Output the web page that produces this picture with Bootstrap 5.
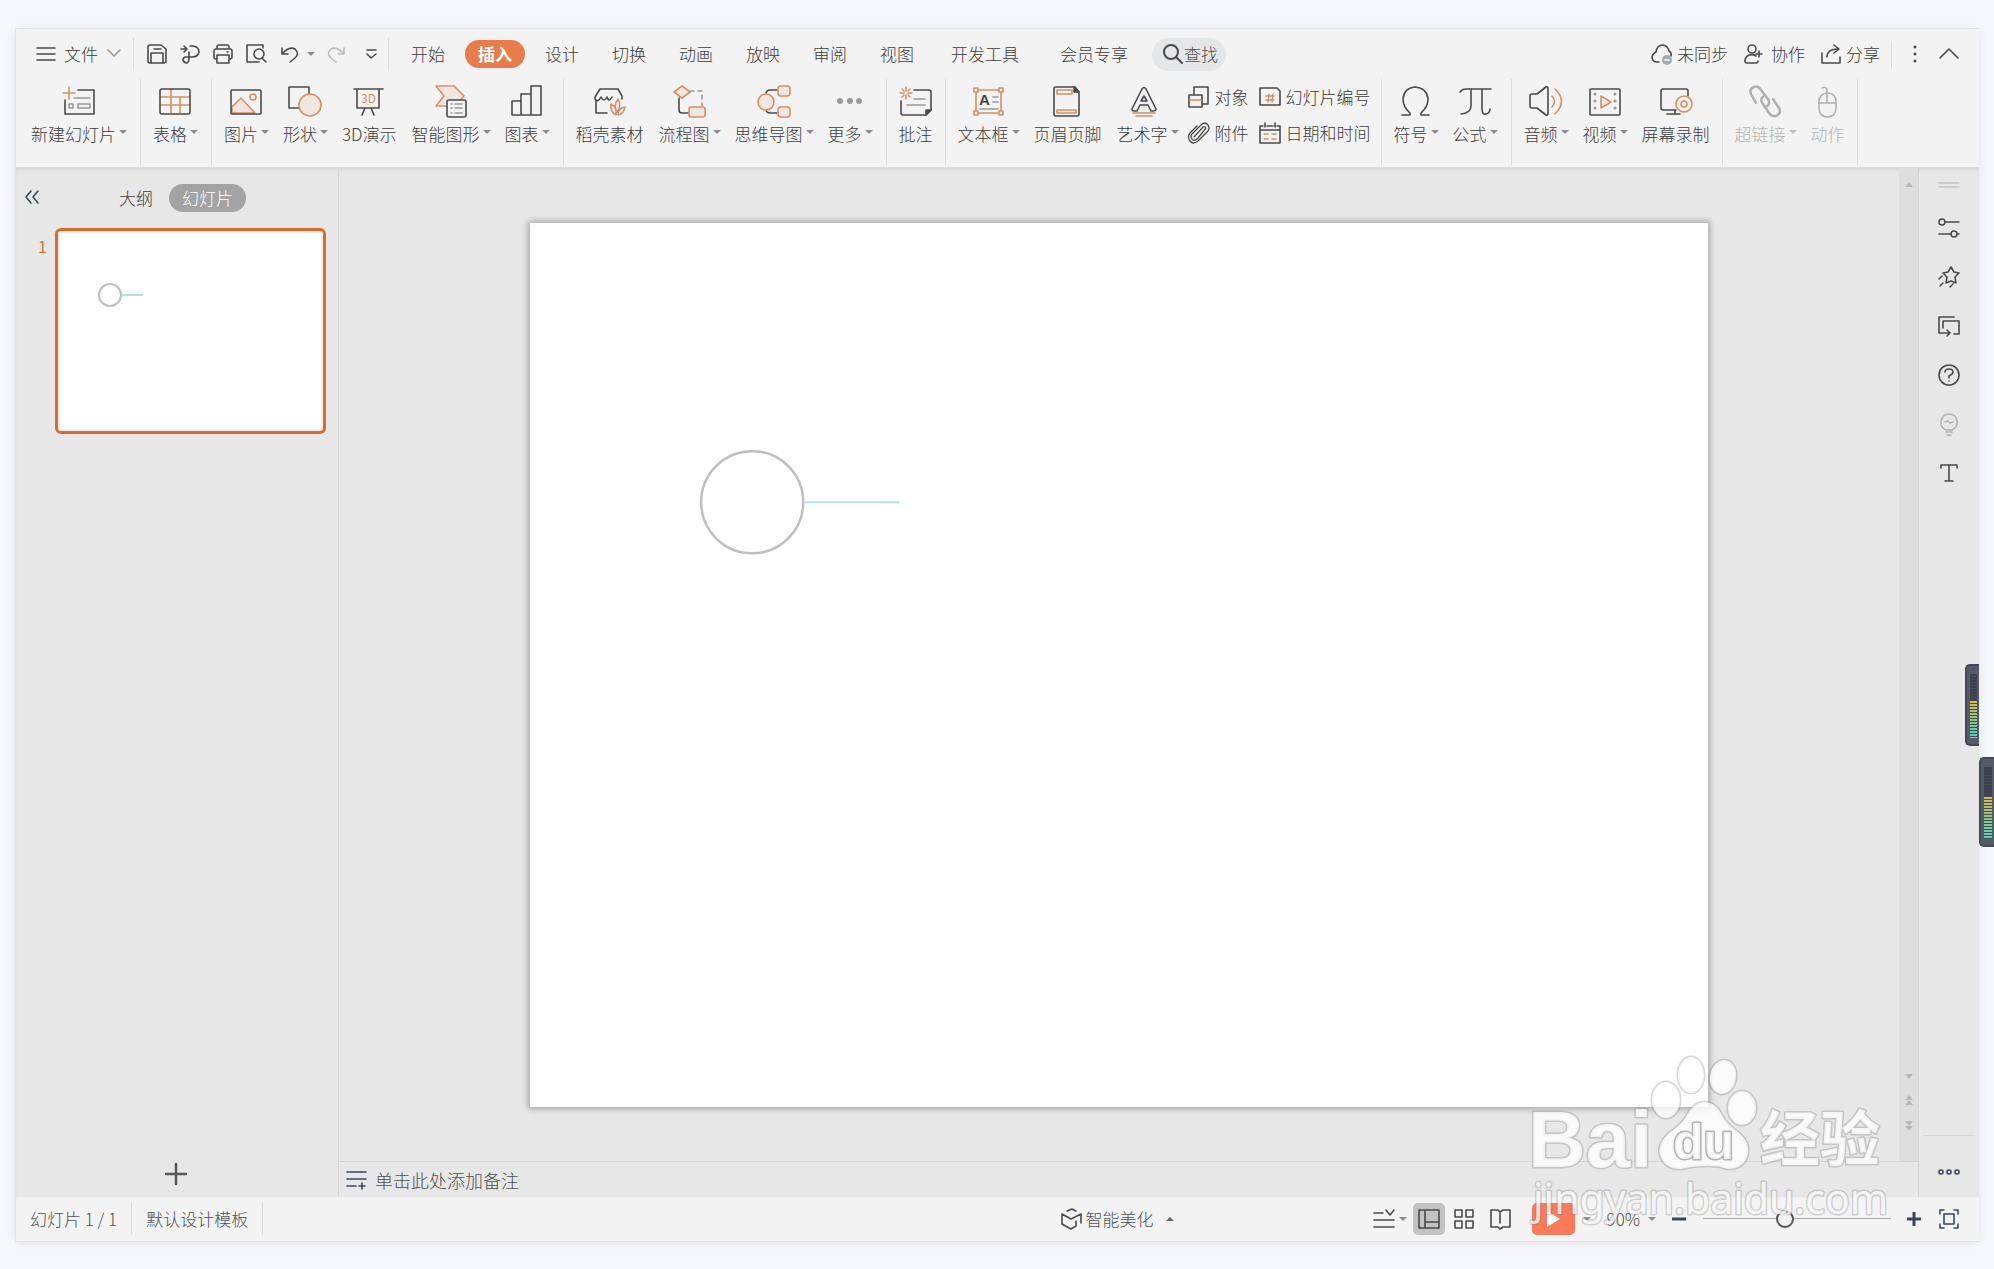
<!DOCTYPE html>
<html lang="zh-CN">
<head>
<meta charset="utf-8">
<meta name="viewport" content="width=device-width, initial-scale=1">
<title>演示文稿</title>
<link href="https://cdn.jsdelivr.net/npm/bootstrap@5.3.0/dist/css/bootstrap.min.css" rel="stylesheet">
<script src="https://cdn.jsdelivr.net/npm/bootstrap@5.3.0/dist/js/bootstrap.bundle.min.js"></script>
<style>
:root { --ink:#4a4a4a; --soft:#999; --line:#dedede; --bar:#f3f3f3; --pane:#e7e7e7; --accent:#e97c4b; --orange:#d98f62; --tint:#f1e6e0; --navy:#3a4560; }
body { background:#f7f8fb; color:#3c3c3c; font-family:"Noto Sans CJK SC",sans-serif; font-size:17px; line-height:24px; font-weight:300; min-height:100vh; padding:28px 15px; }
button, a, input { font:inherit; color:inherit; }
a { text-decoration:none; }
.plain { border:0; background:none; padding:0; color:inherit; white-space:nowrap; }
svg { display:block; overflow:visible; fill:none; stroke:var(--ink); stroke-width:1.6; stroke-linejoin:round; stroke-linecap:round; flex:none; }
svg .o { stroke:var(--orange); }
svg .t { stroke:var(--orange); fill:var(--tint); }
svg .g { stroke:var(--soft); }
svg .n { stroke:var(--navy); }
svg .b { fill:var(--bar); }
svg text { stroke:none; }
.app-window { height:calc(100vh - 55px); min-height:700px; background:var(--bar); border:1px solid #e3e4e5; box-shadow:0 1px 10px rgba(0,0,0,.09); border-right:0; }
.menu-row { height:50px; padding:0 20px; }
.bar-rule { width:1px; background:var(--line); }
.menu-row .bar-rule { height:33px; margin-left:11px; }
.menu-row .bar-rule.short { height:27px; }
.caret { width:0; height:0; border:4px solid transparent; border-top-color:#8c8c8c; border-bottom:0; flex:none; }
.caret.up { border-top:0; border-bottom:4px solid #666; }
.quick { gap:13px; margin-left:13px; }
.tabs { gap:7px; margin-left:9px; }
.tabs a { padding:2px 13px; border-radius:14px; white-space:nowrap; }
.tabs a.wide { padding:2px 17px; }
.tabs a.active { background:var(--accent); color:#fff; font-weight:700; }
.find-box { width:74px; height:33px; border-radius:17px; background:#e5e6e8; margin-left:7px; padding:0 6px 0 10px; }
.find-box input, .notes input { border:0; background:none; padding:0; outline:0; min-width:0; width:100%; }
.find-box input::placeholder, .notes input::placeholder { color:#505050; opacity:1; }
.end-tools { gap:21px; padding-left:20px; }
.ribbon { height:89px; padding-left:15px; border-bottom:1px solid #dcdcdc; }
.group { height:86px; gap:15px; padding:6px 12px 0; border-right:1px solid var(--line); }
.group.drop { padding-right:14px; }
.group.mixed { padding-right:10px; }
.group:first-child { padding-left:0; }
.tool { gap:5px; }
.tool .caret { margin:-4px -1px 0 3px; }
.tool.off { color:#b4b4b4; }
.tool.off svg { stroke:#b0b0b0; }
.tool.off .caret { border-top-color:#c0c0c0; }
.pairs { gap:12px; margin-left:-5px; }
.pairs .plain { gap:5px; }
.work { background:var(--pane); min-height:0; box-shadow:inset 0 3px 4px -2px rgba(0,0,0,.1); }
.slides-pane { width:323px; border-right:1px solid #d8d8d8; flex:none; }
.pane-head { height:28px; margin-top:16px; padding-left:9px; }
.outline-tab { margin-left:80px; }
.pill { background:#a3a3a3; color:#fff; border-radius:14px; padding:2px 13px; height:28px; margin-left:16px; }
.thumb { width:271px; height:206px; border:3px solid #dc6b2b; border-radius:6px; background:#fff; box-shadow:inset 0 0 0 2px #eee; margin-left:8px; padding:0; }
.num { width:17px; padding-top:6px; margin-left:14px; color:#dc6b2b; text-align:right; font-size:16px; font-weight:400; }
.add-slide { margin-bottom:12px; margin-right:3px; }
.stage { padding:55px 191px; min-height:0; }
.slide { background:#fff; box-shadow:0 0 6px 2px rgba(0,0,0,.28); aspect-ratio:1177/883; width:100%; }
.scroller { width:20px; background:#dedede; padding:14px 0 30px; gap:8px; border-right:1px solid #d6d6d6; }
.scroller svg { stroke:none; fill:#b8b8b8; }
.notes { height:36px; border-top:1px solid #d6d6d6; padding:0 6px 0 7px; gap:8px; font-size:18px; border-right:1px solid #d6d6d6; }
.side { width:60px; flex:none; padding-top:14px; }
.side .plain { margin-bottom:27px; }
.side .grip { margin-bottom:29px; }
.side hr { width:52px; margin:0 0 33px; color:#aaa; }
.side .last { margin-bottom:22px; }
.status { height:44px; flex:none; border-top:1px solid #eee; color:#505050; padding-bottom:2px; }
.status .bar-rule { height:33px; margin:0 14px; }
.slide-count { margin-left:14px; }
.view-on { background:#c2c2c2; border-radius:5px; padding:5px; margin-left:6px; }
.view-tools { margin-left:199px; padding-right:20px; }
.fit { margin-left:18px; }
.play { background:#fb7a5a; border-radius:5px; width:43px; height:32px; margin-left:20px; }
.zoomer { appearance:none; width:188px; height:18px; background:linear-gradient(#aaa,#aaa) center/100% 1px no-repeat; margin:0 16px; }
.zoomer::-webkit-slider-thumb { appearance:none; width:18px; height:18px; border-radius:50%; border:2px solid #555; background:var(--bar); }
.meter { width:14px; height:82px; right:15px; top:664px; background:#555a6a; border:2px solid #454956; border-right:0; border-radius:5px 0 0 5px; padding:8px 2px 6px 3px; }
.meter.low { right:0; top:757px; width:15px; height:90px; }
.meter i { display:block; height:100%; background:repeating-linear-gradient(transparent 0 2px,#454956 2px 3px),linear-gradient(#3c404c 42%,#d6bd4a 42%,#9cc46c 65%,#4fd3c0); }
.stamp { right:105px; bottom:34px; pointer-events:none; }
.stamp * { paint-order:stroke; }
.stamp g { fill:rgba(255,255,255,.78); stroke:rgba(120,120,120,.3); stroke-width:3; }
.stamp text { stroke:rgba(120,120,120,.3); stroke-width:3; }
.stamp .cutout { stroke:#b4b4b4; }
</style>
</head>
<body>
<main class="app-window d-flex flex-column">
<header>
<nav class="menu-row d-flex align-items-center" aria-label="菜单">
  <button class="plain d-flex align-items-center"><svg width="20" height="14"><path d="M1 1H19M1 7H19M1 13H19"/></svg><span class="ms-2">文件</span><svg class="ms-2" width="16" height="10"><path class="g" d="M2 1L8 7L14 1"/></svg></button>
  <span class="bar-rule"></span>
  <div class="quick d-flex align-items-center">
    <button class="plain" aria-label="保存"><svg width="20" height="20"><path d="M3 1H14L19 5V17Q19 19 17 19H3Q1 19 1 17V3Q1 1 3 1M4 19V9H16V19M7 5H14"/></svg></button>
    <button class="plain" aria-label="输出"><svg width="20" height="20"><path d="M1 5H7M4 2L7 5L4 8M10 2H13Q19 3 19 8Q18 13 12 13H6Q3 13 3 16Q4 19 7 19Q9 18 9 15V8"/></svg></button>
    <button class="plain" aria-label="打印"><svg width="20" height="20"><path d="M4 5V3Q4 1 6 1H14Q16 1 16 3V5M4 15H3Q1 15 1 13V7Q1 5 3 5H17Q19 5 19 7V13Q19 15 17 15H16M4 11H16V19H4ZM14 8H15"/></svg></button>
    <button class="plain" aria-label="预览"><svg width="21" height="20"><path d="M17 4V1H1V18H13M16 14L20 18"/><circle cx="13" cy="10" r="5"/></svg></button>
    <button class="plain d-flex align-items-center" aria-label="撤销"><svg width="19" height="18"><path d="M2 3V9H8M2 9Q9 1 15 4Q20 9 15 13L10 17"/></svg><span class="caret ms-2"></span></button>
    <button class="plain" aria-label="重做"><svg width="17" height="18"><path stroke="#bbb" d="M16 3V9H10M16 9Q9 1 3 4Q-2 9 3 13L8 17"/></svg></button>
    <button class="plain ms-2" aria-label="自定义"><svg width="11" height="11"><path d="M1 1H10M1 5L5 9L10 5"/></svg></button>
  </div>
  <span class="bar-rule"></span>
  <div class="tabs d-flex align-items-center">
    <a href="#">开始</a><a href="#" class="active">插入</a><a href="#">设计</a><a href="#">切换</a><a href="#">动画</a><a href="#">放映</a><a href="#">审阅</a><a href="#">视图</a><a href="#" class="wide">开发工具</a><a href="#" class="wide">会员专享</a>
  </div>
  <label class="find-box d-flex align-items-center"><svg width="22" height="22"><circle cx="9" cy="9" r="7" stroke-width="2"/><path stroke-width="2" d="M14 14L20 20"/></svg><input type="text" placeholder="查找" aria-label="查找"></label>
  <div class="d-flex align-items-center ms-auto">
    <button class="plain d-flex align-items-center gap-1"><svg width="22" height="20"><path d="M8 18H5Q1 17 1 13Q2 9 5 8Q6 1 12 1Q17 2 18 7Q21 9 20 12"/><circle cx="16" cy="16" r="5" fill="#a2a9b8" stroke="none"/><path stroke="#fff" d="M14 16H18"/></svg>未同步</button>
    <button class="plain d-flex align-items-center gap-2 ms-3"><svg width="19" height="20"><circle cx="8" cy="5" r="4"/><path d="M12 12Q9 10 5 11Q1 13 1 17Q1 19 3 19H12Q14 19 14 17M15 7V13M12 10H18"/></svg>协作</button>
    <button class="plain d-flex align-items-center gap-1 ms-3"><svg width="21" height="20"><path d="M1 9V19H19V13M6 13Q6 5 17 5M13 1L18 5L13 9"/></svg>分享</button>
    <span class="bar-rule short"></span>
    <div class="end-tools d-flex align-items-center">
      <button class="plain" aria-label="更多选项"><svg width="6" height="18"><path stroke-width="3" d="M3 2V2M3 9V9M3 16V16"/></svg></button>
      <button class="plain" aria-label="收起"><svg width="20" height="12"><path d="M1 10L10 1L19 10"/></svg></button>
    </div>
  </div>
</nav>
<div class="ribbon d-flex">
  <div class="group drop d-flex align-items-start">
    <button class="plain tool d-flex flex-column align-items-center"><svg width="32" height="32"><path class="o" d="M6 2V14M0 8H12"/><path d="M15 5H31V29H2V15"/><path class="g" d="M11 13H27M6 19H10V23H6ZM15 19H27V23H15Z"/></svg><span class="d-flex align-items-center">新建幻灯片<i class="caret"></i></span></button>
  </div>
  <div class="group drop d-flex align-items-start">
    <button class="plain tool d-flex flex-column align-items-center"><svg width="32" height="32"><path class="o" d="M1 12H31M1 20H31M12 4V28M21 12V28"/><rect x="1" y="4" width="30" height="25" rx="2"/></svg><span class="d-flex align-items-center">表格<i class="caret"></i></span></button>
  </div>
  <div class="group drop d-flex align-items-start">
    <button class="plain tool d-flex flex-column align-items-center"><svg width="32" height="32"><path class="t" d="M2 22L11 13L25 28H2Z"/><circle class="o" cx="23" cy="12" r="3"/><rect x="1" y="5" width="30" height="24" rx="1"/></svg><span class="d-flex align-items-center">图片<i class="caret"></i></span></button>
    <button class="plain tool d-flex flex-column align-items-center"><svg width="32" height="32"><rect x="0" y="2" width="20" height="21"/><circle class="t" cx="21" cy="20" r="11"/></svg><span class="d-flex align-items-center">形状<i class="caret"></i></span></button>
    <button class="plain tool d-flex flex-column align-items-center"><svg width="32" height="32"><path d="M1 4H30M4 4V23H26V4M12 23L9 30M18 23L21 30"/><text x="8" y="18" font-size="12" font-weight="400" fill="#d98f62">3D</text></svg><span>3D演示</span></button>
    <button class="plain tool d-flex flex-column align-items-center"><svg width="32" height="32"><path class="t" d="M1 1H19L29 11L20 21H1L9 11Z"/><rect class="b" x="12" y="15" width="19" height="17" rx="2"/><path class="g" d="M16 19H17M20 19H27M16 23H17M20 23H27M16 28H17M20 28H27"/></svg><span class="d-flex align-items-center">智能图形<i class="caret"></i></span></button>
    <button class="plain tool d-flex flex-column align-items-center"><svg width="32" height="32"><path d="M1 16H10V30H1ZM10 9H20V30H10ZM20 1H30V30H20Z"/></svg><span class="d-flex align-items-center">图表<i class="caret"></i></span></button>
  </div>
  <div class="group drop d-flex align-items-start">
    <button class="plain tool d-flex flex-column align-items-center"><svg width="32" height="32"><path d="M28 14V11L24 4H6L1 12V14Q4 18 7 12Q10 18 13 12Q15 18 18 12M2 16V28H13"/><path class="o" d="M24 14Q19 21 23 27Q28 21 24 14M17 19Q16 27 22 30Q23 22 17 19M31 22Q24 23 24 30Q30 29 31 22"/></svg><span>稻壳素材</span></button>
    <button class="plain tool d-flex flex-column align-items-center"><svg width="32" height="32"><path d="M6 13V25Q6 28 9 28H16"/><path class="g" stroke-dasharray="4 4" d="M17 6H29V21"/><path class="t" d="M9 1L17 7L9 13L1 7ZM18 22H30Q32 22 32 24V30Q32 32 30 32H18Q16 32 16 30V24Q16 22 18 22"/></svg><span class="d-flex align-items-center">流程图<i class="caret"></i></span></button>
    <button class="plain tool d-flex flex-column align-items-center"><svg width="32" height="32"><path d="M8 9Q8 5 12 5H19M8 24Q8 28 12 28H19"/><circle class="t" cx="8" cy="17" r="8"/><rect class="t" x="20" y="1" width="12" height="10" rx="3"/><rect class="t" x="20" y="22" width="12" height="10" rx="3"/></svg><span class="d-flex align-items-center">思维导图<i class="caret"></i></span></button>
    <button class="plain tool d-flex flex-column align-items-center"><svg width="32" height="32"><path class="g" stroke-width="6" d="M6 16V16M16 16V16M25 16V16"/></svg><span class="d-flex align-items-center">更多<i class="caret"></i></span></button>
  </div>
  <div class="group d-flex align-items-start">
    <button class="plain tool d-flex flex-column align-items-center"><svg width="32" height="32"><path class="o" d="M6 2V6M6 10V14M0 8H4M8 8H12M2 4L4 6M8 10L10 12M10 4L8 6M2 12L4 10"/><path d="M14 5H29Q31 5 31 7V25L26 30H3Q1 30 1 28V16"/><path fill="#444" d="M31 25H26V30Z"/><path class="g" d="M14 14H25M7 20H25"/></svg><span>批注</span></button>
  </div>
  <div class="group mixed d-flex align-items-start">
    <button class="plain tool d-flex flex-column align-items-center"><svg width="32" height="32"><path class="o" d="M4 5H29V28H4Z"/><path class="o b" d="M2 3H6V7H2ZM27 3H31V7H27ZM2 26H6V30H2ZM27 26H31V30H27Z"/><text x="7" y="20" font-size="15" font-weight="700" fill="#444" font-family="Liberation Sans">A</text><path class="g" d="M21 12H26M21 17H26M8 24H26"/></svg><span class="d-flex align-items-center">文本框<i class="caret"></i></span></button>
    <button class="plain tool d-flex flex-column align-items-center"><svg width="32" height="32"><path d="M4 2H23L27 7V29Q27 31 25 31H4Q2 31 2 29V4Q2 2 4 2"/><path fill="#444" d="M22 2V7H27Z"/><path class="o" d="M5 5H20V9H5ZM5 25H24V28H5Z"/></svg><span>页眉页脚</span></button>
    <button class="plain tool d-flex flex-column align-items-center"><svg width="32" height="32"><path d="M11 4Q13 1 15 4L25 24Q25 26 22 26H20L17 20H9L6 26H3Q1 26 1 24ZM13 11L10 16H16Z"/><path class="o" d="M2 28H24M5 31H21"/></svg><span class="d-flex align-items-center">艺术字<i class="caret"></i></span></button>
    <div class="pairs d-flex flex-column">
      <button class="plain d-flex align-items-center"><svg width="22" height="22"><path d="M6 8V1H20V18H15M1 9H14V21H1Z"/><path class="o" d="M2 14H13"/></svg>对象</button>
      <button class="plain d-flex align-items-center"><svg width="22" height="22"><path stroke-width="1.3" d="M6 15L15 5Q17 4 18 6L10 16Q6 20 4 17Q2 14 4 12L13 3Q17 -1 20 3Q22 6 20 9L10 19Q5 23 2 19Q-1 15 2 11L9 4"/></svg>附件</button>
    </div>
    <div class="pairs d-flex flex-column">
      <button class="plain d-flex align-items-center"><svg width="22" height="22"><path d="M2 2H18L21 5V19H1V2"/><path class="o" stroke-width="1.3" d="M10 8L9 16M14 8L13 16M7 10H15M7 14H15"/></svg>幻灯片编号</button>
      <button class="plain d-flex align-items-center"><svg width="22" height="22"><path d="M4 4H1V21H21V4H18M8 4H14M6 1V5M16 1V5M1 8H21"/><path class="o" stroke-dasharray="4 4" d="M5 12H17M5 17H17"/></svg>日期和时间</button>
    </div>
  </div>
  <div class="group drop d-flex align-items-start">
    <button class="plain tool d-flex flex-column align-items-center"><svg width="32" height="32"><path d="M2 30H10V28Q3 22 3 14Q4 3 15 2Q27 3 28 14Q28 22 21 28V30H29"/></svg><span class="d-flex align-items-center">符号<i class="caret"></i></span></button>
    <button class="plain tool d-flex flex-column align-items-center"><svg width="32" height="32"><path d="M1 7Q3 4 7 4H32M12 4V21Q12 28 2 29M23 4V24Q23 30 27 29Q31 28 31 24"/></svg><span class="d-flex align-items-center">公式<i class="caret"></i></span></button>
  </div>
  <div class="group d-flex align-items-start">
    <button class="plain tool d-flex flex-column align-items-center"><svg width="32" height="32"><path d="M2 9H7L16 2Q18 1 18 4V28Q18 31 16 30L7 23H2Q0 23 0 21V11Q0 9 2 9"/><path class="o" d="M22 11Q27 16 22 22M25 4Q38 16 25 29"/></svg><span class="d-flex align-items-center">音频<i class="caret"></i></span></button>
    <button class="plain tool d-flex flex-column align-items-center"><svg width="32" height="32"><rect x="1" y="4" width="30" height="26" rx="1"/><path stroke-width="3" class="g" d="M6 9V9M6 16V16M6 23V23M26 9V9M26 16V16M26 23V23"/><path class="t" d="M12 11V23L22 17Z"/></svg><span class="d-flex align-items-center">视频<i class="caret"></i></span></button>
    <button class="plain tool d-flex flex-column align-items-center"><svg width="32" height="32"><path d="M16 25H3Q1 25 1 23V6Q1 4 3 4H26Q28 4 28 6V11M15 25V29M7 29H20"/><circle class="o b" cx="24" cy="19" r="8"/><circle class="o" cx="24" cy="19" r="3"/></svg><span>屏幕录制</span></button>
  </div>
  <div class="group d-flex align-items-start">
    <button disabled class="plain tool off d-flex flex-column align-items-center"><svg width="32" height="32"><path stroke-width="2.5" d="M7 18L2 9Q0 4 5 2Q9 0 12 5L19 14Q22 19 17 22M24 14L30 23Q33 28 27 31Q23 32 20 28L14 19Q10 14 15 11"/></svg><span class="d-flex align-items-center">超链接<i class="caret"></i></span></button>
    <button disabled class="plain tool off d-flex flex-column align-items-center"><svg width="32" height="32"><rect x="7" y="8" width="17" height="24" rx="8"/><path d="M7 18H24M15 18V5Q14 1 10 3"/></svg><span>动作</span></button>
  </div>
</div>
</header>
<section class="work d-flex flex-grow-1">
  <aside class="slides-pane d-flex flex-column">
    <div class="pane-head d-flex align-items-center">
      <button class="plain" aria-label="折叠"><svg width="14" height="14"><path class="n" d="M6 0L1 6L6 12M13 0L8 6L13 12"/></svg></button>
      <button class="plain outline-tab">大纲</button>
      <button class="plain pill">幻灯片</button>
    </div>
    <div class="d-flex mt-3">
      <span class="num">1</span>
      <button class="thumb" aria-label="幻灯片 1"><svg width="100%" viewBox="0 0 265 200"><circle cx="52" cy="64" r="11" stroke="#bfbfbf" stroke-width="2"/><path stroke="#b7dee5" stroke-width="2" d="M64 64H84"/></svg></button>
    </div>
    <button class="plain add-slide mt-auto align-self-center" aria-label="新建幻灯片"><svg width="22" height="22"><path stroke="#555" stroke-width="2.5" d="M1 11H21M11 1V21"/></svg></button>
  </aside>
  <div class="d-flex flex-column flex-grow-1" style="min-width:0">
    <div class="d-flex flex-grow-1" style="min-height:0">
      <div class="stage flex-grow-1"><div class="slide"><svg width="100%" viewBox="0 0 1177 883"><circle cx="222" cy="279" r="51" stroke="#bfbfbf" stroke-width="2.5"/><path stroke="#b7dee5" stroke-width="2" stroke-linecap="butt" d="M274 279H369"/></svg></div></div>
      <div class="scroller d-flex flex-column align-items-center">
        <svg width="8" height="5"><path d="M0 5L4 0L8 5Z"/></svg>
        <svg class="mt-auto" width="8" height="5"><path d="M0 0L4 5L8 0Z"/></svg>
        <svg class="mt-2" width="8" height="10"><path d="M0 5L4 0L8 5ZM0 10L4 5L8 10Z"/></svg>
        <svg class="mt-2" width="8" height="10"><path d="M0 0L4 5L8 0ZM0 5L4 10L8 5Z"/></svg>
      </div>
    </div>
    <label class="notes d-flex align-items-center"><svg width="21" height="18"><path class="n" d="M1 1H20M1 8H20M1 15H10M16 12V18M13 15H19"/></svg><input type="text" placeholder="单击此处添加备注" aria-label="备注"></label>
  </div>
  <aside class="side d-flex flex-column align-items-center">
    <svg class="grip" width="22" height="6"><path stroke="#c4c4c4" d="M1 1H21M1 5H21"/></svg>
    <button class="plain" aria-label="属性"><svg width="22" height="22"><circle cx="4" cy="5" r="3"/><path d="M7 5H21M1 17H13M19 17H21"/><circle cx="16" cy="17" r="3"/></svg></button>
    <button class="plain" aria-label="动画"><svg width="22" height="22"><path d="M13 1L16 6L21 7L17 11L18 17L13 15L8 17L9 11L5 7L10 6ZM1 13L4 10M2 20L5 17M12 21L15 18"/></svg></button>
    <button class="plain" aria-label="切换"><svg width="22" height="22"><path d="M16 2H1V18H11M9 15L12 18L9 21M5 13V6H21V19H16"/></svg></button>
    <button class="plain" aria-label="帮助"><svg width="22" height="22"><circle cx="11" cy="11" r="10"/><path d="M7 8Q7 5 11 5Q15 5 15 8Q15 10 11 12V14M11 17V17"/></svg></button>
    <button class="plain" aria-label="提示"><svg width="22" height="22"><path stroke="#b4b4b4" d="M8 17Q2 14 3 8Q5 1 11 1Q18 1 19 8Q20 14 14 17ZM8 19H14M9 22H13M7 9L10 8L12 10L15 9"/></svg></button>
    <button class="plain" aria-label="文字"><svg width="22" height="22"><path d="M3 6V3H19V6M11 3V19M7 19H15"/></svg></button>
    <hr class="mt-auto">
    <button class="plain last" aria-label="更多"><svg width="22" height="6"><g class="n"><circle cx="3" cy="3" r="2"/><circle cx="11" cy="3" r="2"/><circle cx="19" cy="3" r="2"/></g></svg></button>
  </aside>
</section>
<footer class="status d-flex align-items-center">
  <span class="slide-count">幻灯片 1 / 1</span><span class="bar-rule"></span><span>默认设计模板</span><span class="bar-rule"></span>
  <button class="plain d-flex align-items-center ms-auto"><svg width="21" height="22"><path d="M6 3L11 1L15 3M1 6L10 11L20 6M1 6V16L10 21L15 18V13M20 6V15"/></svg><span class="mx-1">智能美化</span><i class="caret up ms-2"></i></button>
  <div class="view-tools d-flex align-items-center">
    <button class="plain d-flex align-items-center" aria-label="备注"><svg width="22" height="19"><path d="M1 4H10M13 1L17 6L21 1M1 11H21M1 18H21"/></svg><i class="caret ms-1"></i></button>
    <button class="plain view-on" aria-label="普通视图"><svg width="22" height="22"><path d="M1 2H21V20H1ZM7 2V20M7 14H21"/></svg></button>
    <button class="plain ms-2" aria-label="浏览视图"><svg width="22" height="20"><path d="M2 1H9V8H2ZM13 1H20V8H13ZM2 12H9V19H2ZM13 12H20V19H13Z"/></svg></button>
    <button class="plain ms-3" aria-label="阅读视图"><svg width="21" height="20"><path d="M0 1H7L9 3L12 1H19V18H12L9 20L7 18H0ZM9 3V14"/></svg></button>
    <button class="plain play d-flex align-items-center justify-content-center" aria-label="播放"><svg width="14" height="18"><path fill="#fff" stroke="none" d="M1 1L14 9L1 17Z"/></svg></button>
    <i class="caret ms-2"></i>
    <button class="plain d-flex align-items-center ms-3">90%<i class="caret ms-2"></i></button>
    <button class="plain ms-3" aria-label="缩小"><svg width="15" height="14"><path class="n" stroke-width="3" stroke-linecap="butt" d="M0 7H14"/></svg></button>
    <input class="zoomer" type="range" min="0" max="100" value="43" aria-label="缩放">
    <button class="plain" aria-label="放大"><svg width="14" height="14"><path class="n" stroke-width="3" stroke-linecap="butt" d="M0 7H14M7 0V14"/></svg></button>
    <button class="plain fit" aria-label="适应窗口"><svg width="20" height="20"><path class="n" d="M1 5V1H5M15 1H19V5M19 15V19H15M5 19H1V15M5 5H15V15H5Z"/></svg></button>
  </div>
</footer>
</main>
<div class="meter position-absolute"><i></i></div>
<div class="meter low position-absolute"><i></i></div>
<svg class="stamp position-absolute" width="364" height="185" viewBox="0 0 364 185" aria-label="Baidu 经验">
  <g>
    <ellipse cx="141" cy="50" rx="14" ry="18"/><ellipse cx="166" cy="25" rx="13" ry="18"/><ellipse cx="198" cy="27" rx="13" ry="17" transform="rotate(10 198 27)"/><ellipse cx="217" cy="58" rx="14" ry="17"/>
    <path d="M179 52Q191 52 198 67Q203 75 214 83Q225 92 223 104Q219 119 203 119Q191 115 179 116Q166 116 157 119Q140 120 135 105Q132 94 144 83Q156 75 162 65Q168 53 179 52Z"/>
    <text x="3" y="117" font-family="Liberation Sans" font-weight="700" font-size="80">Bai</text>
    <text class="cutout" x="148" y="109" font-family="Liberation Sans" font-weight="700" font-size="50">du</text>
    <text x="235" y="111" font-family="Noto Sans CJK SC" font-weight="700" font-size="60">经验</text>
    <text x="8" y="164" font-family="Noto Sans" font-weight="400" font-size="41">jingyan.baidu.com</text>
  </g>
</svg>
</body>
</html>
